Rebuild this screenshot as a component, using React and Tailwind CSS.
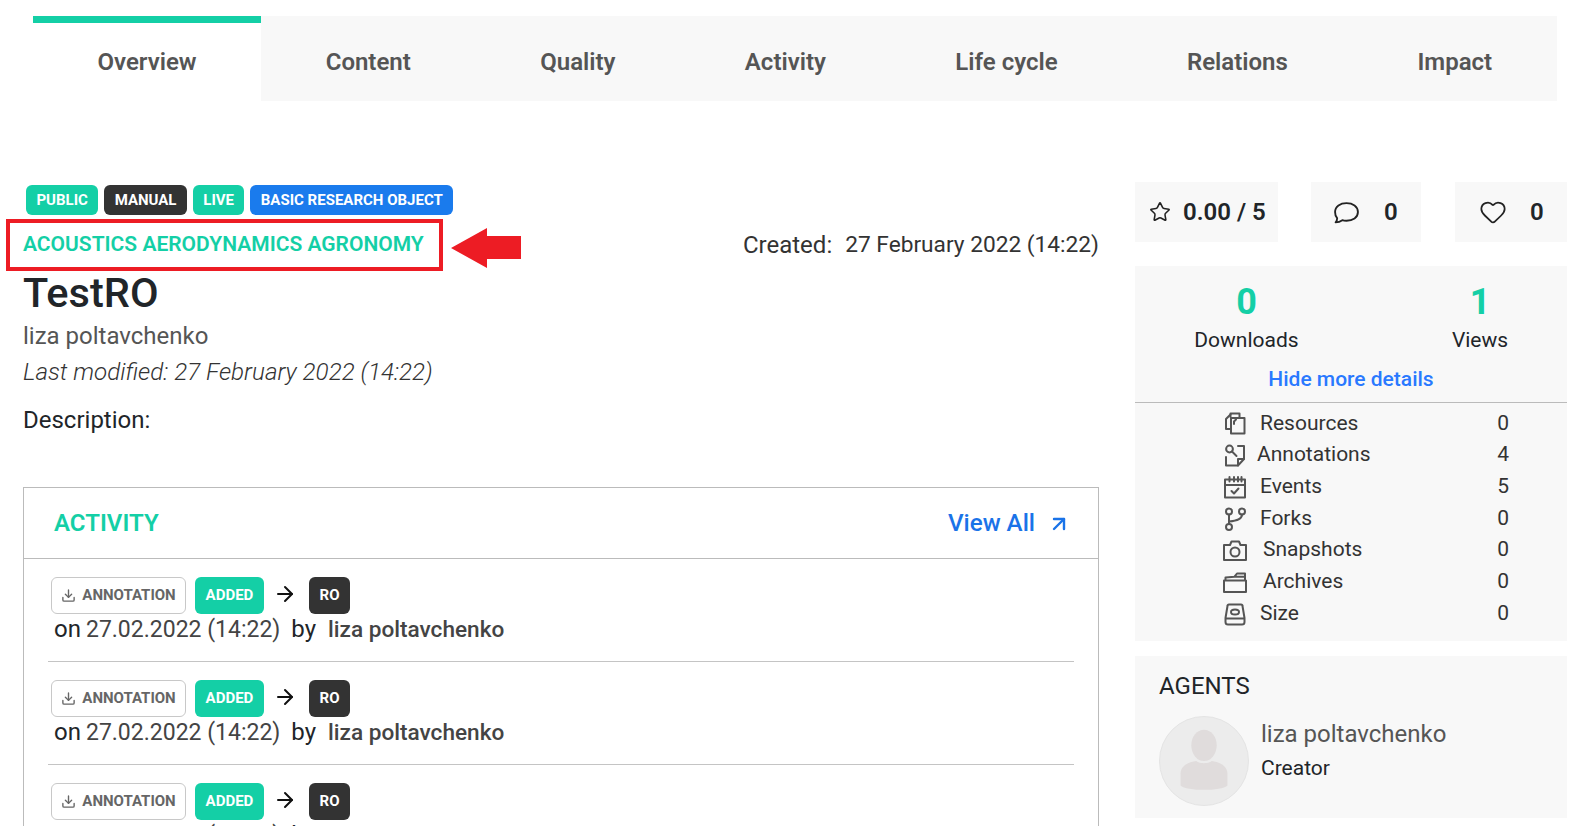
import React from "react";
import { Star, Heart, ArrowUpRight, Download, ArrowRight } from "lucide-react";

const tabs = [
  ["Overview", true],
  ["Content"],
  ["Quality"],
  ["Activity"],
  ["Life cycle"],
  ["Relations"],
  ["Impact"],
];

const I = ({ children }) => (
  <svg viewBox="0 0 24 24" fill="none" stroke="#555" strokeWidth="2" strokeLinejoin="round" strokeLinecap="round" className="w-[24px] h-[24px] shrink-0">
    {children}
  </svg>
);

const ResourcesIcon = () => (
  <I>
    <path d="M7.500 6V2.500h9V7" />
    <path d="M7.500 18H3V8l4.500-4.500" />
    <path d="M8 7h13.500v15.500H8z" />
    <path d="M11 13v-2.500l2-2" />
  </I>
);
const AnnotationIcon = () => (
  <I>
    <path d="M15 3h6v13l-6 6.500H3V14" />
    <path d="M21 16h-6v6.500" />
    <circle cx="6.500" cy="6" r="3.400" />
    <path d="M9 8.500l4.500 4.500" />
  </I>
);
const EventsIcon = () => (
  <I>
    <path d="M2 4.500h20v18H2zM2 10h20M6.500 2v4.500M11 2v4.500M15 2v4.500M18.500 2v4.500" />
    <path d="M8.500 16l2.500 2.500 4.500-5" />
  </I>
);
const ForksIcon = () => (
  <I>
    <circle cx="6" cy="4.500" r="3" />
    <circle cx="19" cy="4.500" r="3" />
    <circle cx="6" cy="20" r="3" />
    <path d="M6 7.500v9.500M19 7.500c0 5-6 6.500-13 7" />
  </I>
);
const CameraIcon = () => (
  <I>
    <path d="M1 7h6l1.500-3.500h7.500L17.500 7H23v15H1z" />
    <circle cx="12" cy="14" r="4.500" />
  </I>
);
const ArchiveIcon = () => (
  <I>
    <path d="M1 10.500h22V22H1zM2.500 10.500V7.500l9-.8 2.500-3.200h8V10.500M12 6.700h10" />
  </I>
);
const SizeIcon = () => (
  <I>
    <path d="M6 2.500h12a1.500 1.500 0 0 1 1.500 1.500L21.500 16v4a2.500 2.500 0 0 1-2.500 2.500H5A2.500 2.500 0 0 1 2.500 20v-4L4.500 4A1.500 1.500 0 0 1 6 2.500zM2.500 16.500h19" />
    <ellipse cx="12" cy="10" rx="4" ry="2.500" />
  </I>
);

const details = [
  ["Resources", "0", <ResourcesIcon />, "ml-[13px]"],
  ["Annotations", "4", <AnnotationIcon />, "ml-[10px]"],
  ["Events", "5", <EventsIcon />, "ml-[13px]"],
  ["Forks", "0", <ForksIcon />, "ml-[13px]"],
  ["Snapshots", "0", <CameraIcon />, "ml-[16px]"],
  ["Archives", "0", <ArchiveIcon />, "ml-[16px]"],
  ["Size", "0", <SizeIcon />, "ml-[13px]"],
];

const Badge = ({ children, color }) => (
  <span className={`inline-flex items-center justify-center h-[30px] px-[10.400px] rounded-[6px] text-white text-[15px] font-bold ${color}`}>
    {children}
  </span>
);

const ActivityRow = ({ last }) => (
  <div className={`mx-[24px] h-[103px] pt-[18px] ${last ? "" : "border-b border-[#c4c4c4]"}`}>
    <div className="flex items-center h-[37px] pl-[3px]">
      <span className="inline-flex items-center justify-center w-[135px] h-[37px] bg-white border border-[#c8c8c8] rounded-[6px] text-[#666] text-[15px] font-bold gap-[6px]">
        <Download size={15} color="#666" strokeWidth={2.200} />
        ANNOTATION
      </span>
      <span className="inline-flex items-center justify-center w-[69px] h-[37px] ml-[9px] bg-[#14cfa6] rounded-[6px] text-white text-[15px] font-bold">
        ADDED
      </span>
      <ArrowRight size={24} color="#111" strokeWidth={2} className="ml-[9px] -mt-[3px]" />
      <span className="inline-flex items-center justify-center w-[41px] h-[37px] ml-[12px] bg-[#333] rounded-[6px] text-white text-[15px] font-bold">
        RO
      </span>
    </div>
    <div className="pl-[6px] -mt-[1px] text-[24px] leading-[32px] text-[#212529] flex items-baseline whitespace-nowrap">
      <span>on</span>
      <span className="ml-[5px] text-[#444] text-[23px]">27.02.2022 (14:22)</span>
      <span className="ml-[11px]">by</span>
      <span className="ml-[12px] text-[#444] font-medium text-[22.600px]">liza poltavchenko</span>
    </div>
  </div>
);

export default function App() {
  return (
    <div className="w-[1572px] h-[826px] overflow-hidden bg-white font-['Roboto',sans-serif] text-[#212529]">
      <div className="flex ml-[33px] w-[1524px] h-[85px] translate-y-[16px]">
        {tabs.map(([t, active], i) => (
          <div
            key={t}
            className={`flex items-center justify-center whitespace-nowrap px-[64.700px] text-[24px] font-semibold text-[#555] border-t-[7px] ${
              active ? "bg-white border-[#14cfa6] w-[228px]" : "bg-[#f8f8f8] border-[#f8f8f8]"
            } ${i === tabs.length - 1 ? "flex-1" : ""}`}
          >
            {t}
          </div>
        ))}
      </div>

      <div className="flex mt-[97px]">
        <div className="ml-[23px] w-[1076px] shrink-0">
          <div className="flex gap-[6px] ml-[3px] mt-[3px]">
            <Badge color="bg-[#14cfa6]">PUBLIC</Badge>
            <Badge color="bg-[#333]">MANUAL</Badge>
            <Badge color="bg-[#14cfa6]">LIVE</Badge>
            <Badge color="bg-[#1a7bed]">BASIC RESEARCH OBJECT</Badge>
          </div>

          <div className="relative flex justify-between items-center h-[52px] mt-[4px]">
            <span className="text-[#14cfa6] text-[21px] font-semibold">ACOUSTICS AERODYNAMICS AGRONOMY</span>
            <span className="text-[24px] text-[#333] flex items-center">
              Created:<span className="ml-[13px] text-[22.700px]">27 February 2022 (14:22)</span>
            </span>
            <div className="absolute left-[-17px] top-0 w-[437px] h-[52px] border-[4px] border-[#ed1c24]" />
            <svg viewBox="0 0 70 40" className="absolute left-[428px] top-[9px] w-[70px] h-[40px]">
              <path d="M0 20L36 0V8H70V31H36V40Z" fill="#ed1c24" />
            </svg>
          </div>

          <h1 className="text-[41.500px] leading-[46px] font-medium -mt-[1px]">TestRO</h1>
          <p className="text-[24px] leading-[32px] mt-[4px] text-[#555]">liza poltavchenko</p>
          <p className="text-[24.200px] leading-[32px] mt-[4px] italic font-light text-[#333]">Last modified: 27 February 2022 (14:22)</p>
          <p className="text-[24px] leading-[32px] mt-[16px]">Description:</p>

          <div className="mt-[51px] border border-[#bbb]">
            <div className="flex items-center justify-between h-[71px] pl-[30px] pr-[27px] border-b border-[#bbb]">
              <span className="text-[#14cfa6] text-[24px] font-semibold">ACTIVITY</span>
              <span className="flex items-center text-[#1a73e8] text-[24.200px] font-medium">
                View All
                <ArrowUpRight size={24} strokeWidth={2.400} className="ml-[12px] mt-[2px]" />
              </span>
            </div>
            <ActivityRow />
            <ActivityRow />
            <ActivityRow last />
          </div>
        </div>

        <div className="ml-[36px] w-[432px] shrink-0">
          <div className="flex h-[60px]">
            <div className="w-[143px] bg-[#f8f8f8] flex items-center pl-[14px] text-[24px] font-semibold">
              <Star size={22} strokeWidth={1.700} color="#222" />
              <span className="ml-[12px]">0.00 / 5</span>
            </div>
            <div className="w-[110px] ml-[33px] bg-[#f8f8f8] flex items-center pl-[22px] text-[24px] font-semibold">
              <svg viewBox="0 0 26 24" fill="none" stroke="#222" strokeWidth="1.800" strokeLinejoin="round" className="w-[27px] h-[25px]">
                <path d="M13 3c6 0 11 3 11 8.500S19 20 13 20c-1.500 0-3-.2-4-.6C7.500 20.500 5 21.500 2.500 21.500c1-1 1.500-2.500 1.500-4C2.500 16 2 13.500 2 11.500 2 6 7 3 13 3z" />
              </svg>
              <span className="ml-[24px]">0</span>
            </div>
            <div className="w-[112px] ml-[34px] bg-[#f8f8f8] flex items-center pl-[24px] text-[24px] font-semibold">
              <Heart size={28} strokeWidth={1.500} color="#222" />
              <span className="ml-[23px]">0</span>
            </div>
          </div>

          <div className="mt-[24px] bg-[#f8f8f8] h-[375px]">
            <div className="flex h-[96px]">
              <div className="w-[223px] text-center">
                <div className="text-[#14cfa6] text-[36px] leading-[40px] font-bold mt-[16px]">0</div>
                <div className="text-[21px] leading-[28px] mt-[4px]">Downloads</div>
              </div>
              <div className="flex-1 text-center pl-[35px]">
                <div className="text-[#14cfa6] text-[36px] leading-[40px] font-bold mt-[16px]">1</div>
                <div className="text-[21px] leading-[28px] mt-[4px]">Views</div>
              </div>
            </div>
            <div className="text-center text-[#2979ff] text-[21px] leading-[28px] font-medium h-[40px] pt-[3px]">Hide more details</div>
            <div className="border-t border-[#bbb] pt-[4.600px]">
              {details.map(([label, v, icon, ml]) => (
                <div key={label} className="flex items-center h-[31.700px] pl-[88px] pr-[58px] text-[21px]">
                  <span className="w-[24px] h-[24px] flex items-center justify-center">{icon}</span>
                  <span className={`${ml} flex-1 text-[#333]`}>{label}</span>
                  <span className="text-[#333]">{v}</span>
                </div>
              ))}
            </div>
          </div>

          <div className="mt-[15px] bg-[#f8f8f8] h-[162px] pl-[24px]">
            <div className="text-[24px] leading-[32px] pt-[14px]">AGENTS</div>
            <div className="flex mt-[14px]">
              <div className="w-[90px] h-[90px] rounded-full bg-[#ececec] border border-[#e4e4e4] overflow-hidden shrink-0">
                <svg viewBox="0 0 90 90" className="w-full h-full" fill="#e0dcdc">
                  <ellipse cx="45" cy="29" rx="13" ry="16" />
                  <path d="M21 70V58c0-8 8-12 16-13 4 3 12 3 16 0 8 1 16 5 16 13v12c-6 6-42 6-48 0z" />
                </svg>
              </div>
              <div className="ml-[12px] pt-[2px]">
                <div className="text-[24px] leading-[32px] text-[#555]">liza poltavchenko</div>
                <div className="text-[21px] leading-[28px] mt-[4px]">Creator</div>
              </div>
            </div>
          </div>
        </div>
      </div>
    </div>
  );
}
